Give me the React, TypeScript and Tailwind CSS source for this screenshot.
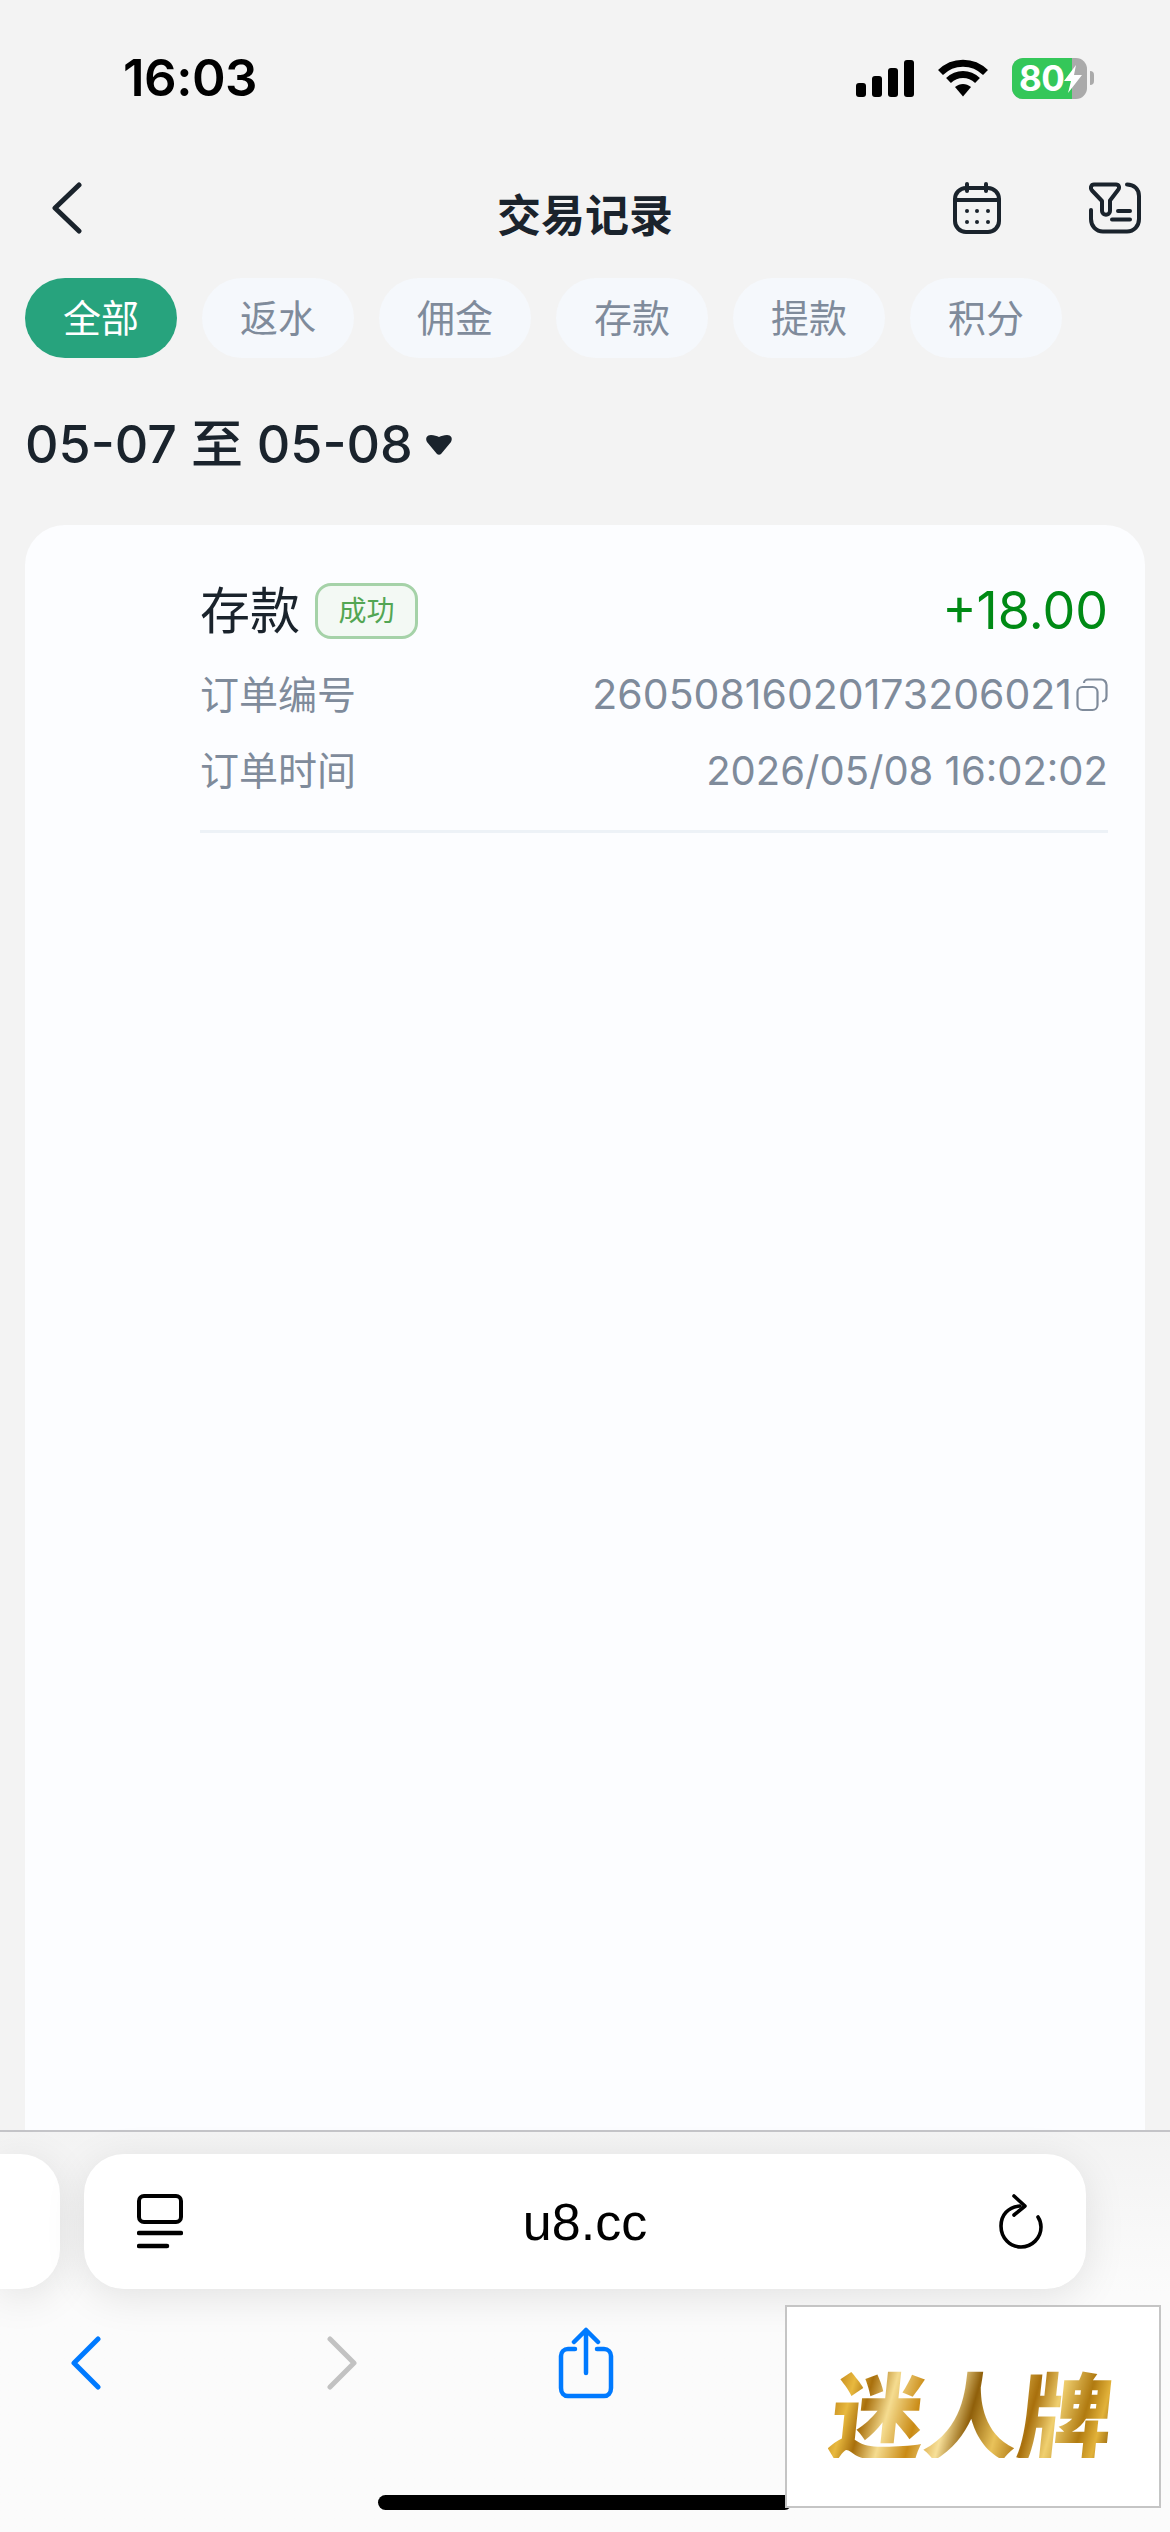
const sans = "font-['Inter','Noto_Sans_CJK_SC',sans-serif]";

const chips = ["全部", "返水", "佣金", "存款", "提款", "积分"];

function Signal() {
  return (
    <div className="flex items-end gap-[6px]">
      <div className="h-[14px] w-[10px] rounded-[3px] bg-black" />
      <div className="h-[21px] w-[10px] rounded-[3px] bg-black" />
      <div className="h-[29px] w-[10px] rounded-[3px] bg-black" />
      <div className="h-[37px] w-[10px] rounded-[3px] bg-black" />
    </div>
  );
}

function Wifi() {
  return (
    <svg width="52" height="38" viewBox="0 0 52 38" fill="none" stroke="#000" strokeWidth="7">
      <path d="M3.5 13.5C16 1 36 1 48.500 13.500" />
      <path d="M11.500 21.500C20 13.500 32 13.500 40.500 21.500" />
      <path d="M18 28L26 37.500L34 28C29 24 23 24 18 28Z" fill="#000" stroke="none" />
    </svg>
  );
}

function Battery() {
  return (
    <div className="flex items-center gap-[3px]">
      <div className="relative flex h-[41px] w-[75px] overflow-hidden rounded-[11px] bg-[#aaaaaa]">
        <div className="h-full w-[60px] bg-[#34c759]" />
        <span className="absolute left-[7px] top-0 font-['Inter',sans-serif] text-[35px] leading-[41px] font-bold tracking-[-0.5px] text-white">
          80
        </span>
        <svg className="absolute left-[52px] top-[7px]" width="18" height="28" viewBox="0 0 18 28" fill="#fff">
          <path d="M12 0L0 16H7L4 28L18 10H10Z" />
        </svg>
      </div>
      <div className="h-[14px] w-[4px] rounded-r-full bg-[#aaaaaa]" />
    </div>
  );
}

function CalendarIcon() {
  return (
    <svg width="48" height="52" viewBox="0 0 48 52" fill="none" stroke="#1a232c" strokeWidth="4" strokeLinecap="round">
      <rect x="2" y="6" width="44" height="44" rx="11" />
      <path d="M2 18H46M14 2V9M33 2V9" />
      <g fill="#1a232c" stroke="none">
        <circle cx="14" cy="29" r="2" />
        <circle cx="24" cy="29" r="2" />
        <circle cx="35" cy="29" r="2" />
        <circle cx="14" cy="40" r="2" />
        <circle cx="24" cy="40" r="2" />
        <circle cx="35" cy="40" r="2" />
      </g>
    </svg>
  );
}

function FilterIcon() {
  return (
    <svg width="52" height="52" viewBox="0 0 52 52" fill="none" stroke="#1a232c" strokeWidth="4" strokeLinecap="round" strokeLinejoin="round">
      <path d="M5 2.500H27C30 2.500 31 5.500 29 8L21 18.500V29C21 34 13 34 13 29V19L3 8.500C1 6 2 2.500 5 2.500Z" />
      <path d="M2 28V37C2 44 7 49.500 14 49.500H38C45 49.500 50 44 50 37V14C50 7 45 2.500 38 2.500" />
      <path d="M29 29H41M23 37.500H41" />
    </svg>
  );
}

function CopyIcon() {
  return (
    <svg width="32" height="34" viewBox="0 0 32 34" fill="none" stroke="#7f8b9b" strokeWidth="2.200">
      <rect x="1.500" y="9" width="20" height="23" rx="5" />
      <path d="M8 5C8 3 10 1.500 12 1.500H25C28 1.500 30.500 4 30.500 7V18C30.500 21 29 23 26 23.500" />
    </svg>
  );
}

function TabsIcon() {
  return (
    <svg width="46" height="56" viewBox="0 0 46 56" fill="none" stroke="#000" strokeWidth="4" strokeLinecap="round">
      <rect x="2" y="2" width="42" height="26" rx="5" />
      <path d="M2 39H44" strokeWidth="4.500" />
      <path d="M2 52H30" strokeWidth="4.500" />
    </svg>
  );
}

function ReloadIcon() {
  return (
    <svg width="46" height="56" viewBox="0 0 46 56" fill="none" stroke="#000" strokeWidth="3.600" strokeLinecap="round" strokeLinejoin="round">
      <path d="M22 12C10 13 3 21 3 32C3 44 12 53 23 53C34 53 43 44 43 33C43 29 42 26 40 23" />
      <path d="M16 2L27 12L16 21" />
    </svg>
  );
}

function ShareIcon() {
  return (
    <svg width="56" height="72" viewBox="0 0 56 72" fill="none" stroke="#007aff" strokeWidth="4.500" strokeLinecap="round" strokeLinejoin="round">
      <path d="M17 22H10C6 22 3 25 3 29V61C3 66 6 69 10 69H46C50 69 53 66 53 61V29C53 25 50 22 46 22H39" />
      <path d="M28 46V3M16 15L28 3L40 15" />
    </svg>
  );
}

function Chevron({ color, flip }: { color: string; flip?: boolean }) {
  return (
    <svg width="30" height="54" viewBox="0 0 30 54" fill="none" stroke={color} strokeWidth="5" strokeLinecap="round" strokeLinejoin="round" className={flip ? "rotate-180" : ""}>
      <path d="M27 3L3 27L27 51" />
    </svg>
  );
}

export default function App() {
  return (
    <div className={`relative flex h-[2532px] w-[1170px] flex-col overflow-hidden bg-[#f3f3f3] ${sans}`}>
      {/* status bar */}
      <div className="flex h-[156px] items-center justify-between pl-[123px] pr-[76px]">
        <span className="text-[51px] font-semibold tracking-[-0.5px] text-black">16:03</span>
        <div className="flex items-center gap-[23px]">
          <Signal />
          <Wifi />
          <Battery />
        </div>
      </div>

      {/* header */}
      <div className="relative flex h-[104px] items-center justify-between pl-[52px] pr-[29px]">
        <svg width="30" height="52" viewBox="0 0 30 52" fill="none" stroke="#1a232c" strokeWidth="5" strokeLinecap="round" strokeLinejoin="round">
          <path d="M27 3L3 26L27 49" />
        </svg>
        <span className="absolute left-0 right-0 top-[27px] text-center text-[44px] font-bold text-[#1a232c]">交易记录</span>
        <div className="flex items-center gap-[88px]">
          <CalendarIcon />
          <FilterIcon />
        </div>
      </div>

      {/* filter chips */}
      <div className="mt-[18px] flex gap-[25px] pl-[25px]">
        {chips.map((chip, i) => (
          <div
            key={chip}
            className={
              i === 0
                ? "flex h-[80px] w-[152px] items-center justify-center rounded-[40px] bg-[#27a37d] text-[38px] text-white"
                : "flex h-[80px] w-[152px] items-center justify-center rounded-[40px] bg-[#f5f8fc] text-[38px] text-[#7f8b9b]"
            }
          >
            {chip}
          </div>
        ))}
      </div>

      {/* date range */}
      <div className="mt-[57px] flex h-[60px] items-center pl-[25px] text-[52px] font-medium text-[#1a232c]">
        <span>05-07 至 05-08</span>
        <svg className="ml-[12px]" width="28" height="22" viewBox="0 0 28 22" fill="#1a232c">
          <path d="M6 1C9 1 12 2 14 3C16 2 19 1 22 1C26 1 28 4 26 8L16 20C15 21 13 21 12 20L2 8C0 4 2 1 6 1Z" />
        </svg>
      </div>

      {/* card */}
      <div className="mx-[25px] mt-[50px] flex-1 rounded-t-[40px] bg-[#fcfdff] pl-[175px] pr-[37px] pt-[58px]">
        <div className="flex h-[56px] items-center justify-between">
          <div className="flex items-center">
            <span className="text-[50px] text-[#1a232c]">存款</span>
            <span className="ml-[15px] flex h-[56px] w-[103px] items-center justify-center rounded-[16px] border-[3px] border-[#a5d2a8] bg-[#f3f9f4] text-[28px] text-[#53a653]">
              成功
            </span>
          </div>
          <span className="text-[52px] text-[#008a15]">+18.00</span>
        </div>
        <div className="mt-[31px] flex h-[50px] items-center justify-between text-[39px] text-[#7f8b9b]">
          <span>订单编号</span>
          <div className="flex items-center gap-[4px]">
            <span className="text-[41px]">26050816020173206021</span>
            <CopyIcon />
          </div>
        </div>
        <div className="mt-[26px] flex h-[50px] items-center justify-between text-[39px] text-[#7f8b9b]">
          <span>订单时间</span>
          <span className="text-[40px]">2026/05/08 16:02:02</span>
        </div>
        <div className="mt-[34px] h-[3px] bg-[#edf2f7]" />
      </div>

      {/* browser toolbar */}
      <div className="h-[402px] border-t-2 border-[#c4c4c8] bg-gradient-to-b from-[#f3f3f3] to-[#fbfbfb] to-40%">
        <div className="mt-[22px] flex gap-[24px]">
          <div className="h-[135px] w-[60px] rounded-r-[40px] bg-white shadow-[0_8px_40px_rgba(0,0,0,0.1)]" />
          <div className="flex h-[135px] w-[1002px] items-center justify-between rounded-[40px] bg-white pl-[53px] pr-[42px] shadow-[0_8px_40px_rgba(0,0,0,0.1)]">
            <TabsIcon />
            <span className="pr-[11px] font-['Liberation_Sans',sans-serif] text-[52px] text-black">u8.cc</span>
            <ReloadIcon />
          </div>
        </div>
        <div className="mt-[38px] flex h-[72px] items-center pl-[71px]">
          <Chevron color="#007aff" />
          <div className="ml-[226px]">
            <Chevron color="#c2c2c2" flip />
          </div>
          <div className="ml-[201px]">
            <ShareIcon />
          </div>
        </div>
        <div className="mt-[96px] flex justify-center">
          <div className="h-[15px] w-[414px] rounded-full bg-black" />
        </div>
      </div>

      {/* floating logo */}
      <div className="absolute left-[785px] top-[2305px] flex h-[203px] w-[376px] items-center justify-center border-2 border-[#c5c5c5] bg-white">
        <span className="-skew-x-6 bg-[linear-gradient(100deg,#b8790f_0%,#e8b93f_8%,#a86f0c_14%,#f5dc90_22%,#c98a14_32%,#f7e09a_42%,#8f5f0a_50%,#e9c25a_60%,#a86f0c_70%,#f0d070_78%,#b07a10_88%,#e2b23a_94%,#8f5f0a_100%)] bg-clip-text pt-[8px] font-['Noto_Sans_CJK_SC',sans-serif] text-[94px] leading-none font-black text-transparent">
          迷人牌
        </span>
      </div>
    </div>
  );
}
